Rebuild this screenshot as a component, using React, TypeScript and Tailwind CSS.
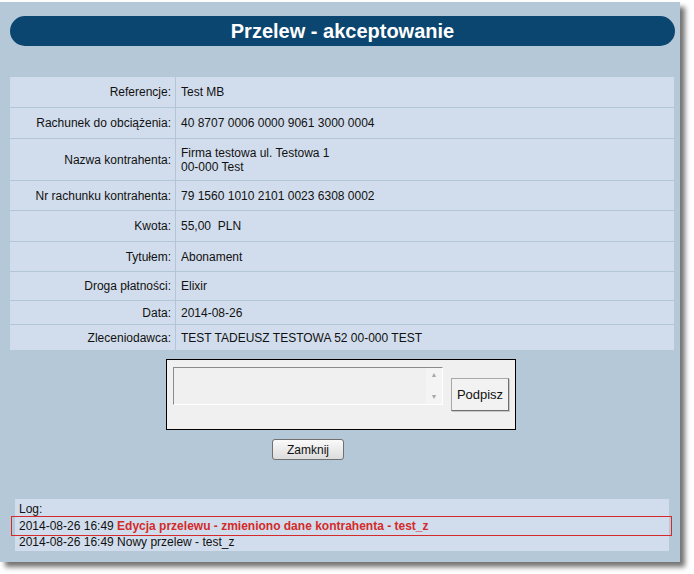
import React from "react";

const rows: { label: string; value: React.ReactNode; h: string }[] = [
  { label: "Referencje:", value: "Test MB", h: "h-[30px]" },
  { label: "Rachunek do obciążenia:", value: "40 8707 0006 0000 9061 3000 0004", h: "h-[31px]" },
  {
    label: "Nazwa kontrahenta:",
    value: (
      <>
        Firma testowa ul. Testowa 1
        <br />
        00-000 Test
      </>
    ),
    h: "h-[42px]",
  },
  { label: "Nr rachunku kontrahenta:", value: "79 1560 1010 2101 0023 6308 0002", h: "h-[30px]" },
  { label: "Kwota:", value: "55,00\u00a0 PLN", h: "h-[31px]" },
  { label: "Tytułem:", value: "Abonament", h: "h-[30px]" },
  { label: "Droga płatności:", value: "Elixir", h: "h-[29px]" },
  { label: "Data:", value: "2014-08-26", h: "h-[24px]" },
  { label: "Zleceniodawca:", value: "TEST TADEUSZ TESTOWA 52 00-000 TEST", h: "h-[26px]" },
];

export default function App() {
  return (
    <div className="w-[694px] h-[574px] bg-white pt-[2px] font-['Liberation_Sans',Arial,sans-serif] text-[12px] text-[#111]">
      <div className="w-[680px] h-[560px] bg-[#b5c8d8] shadow-[5px_5px_5px_rgba(0,0,0,0.55)] pt-[14px] flex flex-col">
        <div className="ml-[10px] w-[665px] h-[30px] rounded-full bg-[#0b4671] flex items-center justify-center">
          <h1 className="text-white font-bold text-[20px]">Przelew - akceptowanie</h1>
        </div>

        <div className="mt-[31px] ml-[10px] w-[664px] bg-[#d1ddec]">
          {rows.map((r, i) => (
            <div
              key={r.label}
              className={`flex ${r.h} ${i > 0 ? "border-t border-[#b3c6d8]" : ""}`}
            >
              <div className="w-[166px] shrink-0 flex items-center justify-end pr-[4px] border-r border-[#b3c6d8]">
                {r.label}
              </div>
              <div className="flex items-center pl-[5px] leading-[14px]">{r.value}</div>
            </div>
          ))}
        </div>

        <div className="mt-[9px] ml-[166px] w-[350px] h-[71px] border border-black bg-[#f0f0f0] flex items-start pl-[6px] pt-[7px]">
          <div className="w-[270px] h-[38px] border border-[#a0a0a0] border-t-[#8a8a8a] border-l-[#8a8a8a] border-b-white border-r-white bg-[#f0f0f0] flex justify-end">
            <div className="w-[16px] h-full bg-[#f4f4f4] flex flex-col items-center justify-between py-[3px] text-[7px] leading-[8px] text-[#a8a8a8]">
              <span>▲</span>
              <span>▼</span>
            </div>
          </div>
          <button className="ml-[8px] mt-[11px] w-[58px] h-[33px] bg-[#f2f2f2] border border-[#a8a8a8] border-b-[#707070] border-r-[#707070] text-[13px] text-[#111] shadow-[1px_1px_0_#c8c8c8]">
            Podpisz
          </button>
        </div>

        <button className="mt-[9px] ml-[272px] self-start w-[72px] h-[21px] rounded-[3px] border border-[#707070] bg-gradient-to-b from-[#fafafa] to-[#dcdcdc] text-[12px] text-[#111]">
          Zamknij
        </button>

        <div className="mt-[39px] ml-[15px] w-[654px] bg-[#d1ddec] flex flex-col">
          <div className="pl-[4px] h-[17px] flex items-end leading-[14px]">Log:</div>
          <div className="ml-[-4px] w-[661px] h-[20px] border border-[#d42a2a] flex items-center pl-[7px]">
            2014-08-26 16:49&nbsp;
            <span className="font-bold text-[#d42a2a]">
              Edycja przelewu - zmieniono dane kontrahenta - test_z
            </span>
          </div>
          <div className="pl-[4px] h-[15px] leading-[13px]">2014-08-26 16:49 Nowy przelew - test_z</div>
        </div>
      </div>
    </div>
  );
}
